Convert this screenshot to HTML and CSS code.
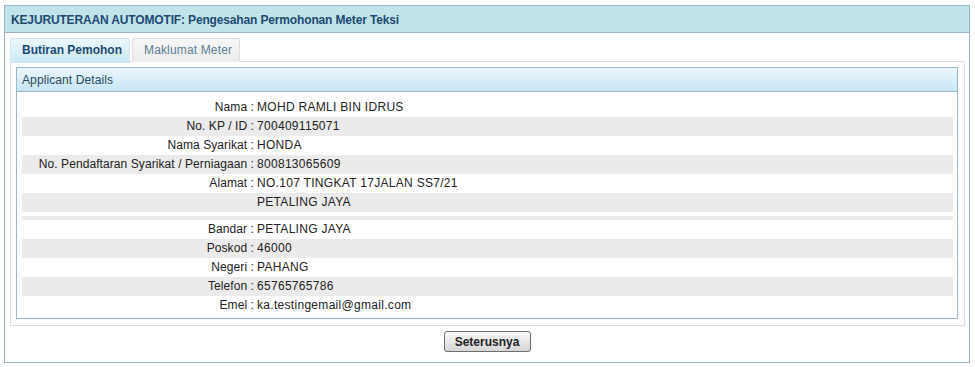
FILE: index.html
```html
<!DOCTYPE html>
<html>
<head>
<meta charset="utf-8">
<link rel="stylesheet" href="styles.css">
</head>
<body>
<div class="page">
  <div class="panel">
    <div class="panel-head">KEJURUTERAAN AUTOMOTIF: Pengesahan Permohonan Meter Teksi</div>
    <div class="tabs">
      <div class="tab active">Butiran Pemohon</div>
      <div class="tab">Maklumat Meter</div>
    </div>
    <div class="tab-panel">
      <div class="box">
        <div class="box-head">Applicant Details</div>
        <table class="details">
          <tr><td class="lbl">Nama :</td><td class="val">MOHD RAMLI BIN IDRUS</td></tr>
          <tr class="alt"><td class="lbl">No. KP / ID :</td><td class="val">700409115071</td></tr>
          <tr><td class="lbl">Nama Syarikat :</td><td class="val">HONDA</td></tr>
          <tr class="alt"><td class="lbl">No. Pendaftaran Syarikat / Perniagaan :</td><td class="val">800813065609</td></tr>
          <tr><td class="lbl">Alamat :</td><td class="val">NO.107 TINGKAT 17JALAN SS7/21</td></tr>
          <tr class="alt"><td class="lbl"></td><td class="val">PETALING JAYA</td></tr>
          <tr class="thin"><td class="lbl"></td><td class="val"></td></tr>
          <tr class="alt thin"><td class="lbl"></td><td class="val"></td></tr>
          <tr><td class="lbl">Bandar :</td><td class="val">PETALING JAYA</td></tr>
          <tr class="alt"><td class="lbl">Poskod :</td><td class="val">46000</td></tr>
          <tr><td class="lbl">Negeri :</td><td class="val">PAHANG</td></tr>
          <tr class="alt"><td class="lbl">Telefon :</td><td class="val">65765765786</td></tr>
          <tr><td class="lbl">Emel :</td><td class="val">ka.testingemail@gmail.com</td></tr>
        </table>
      </div>
    </div>
    <div class="actions">
      <button class="btn" type="button">Seterusnya</button>
    </div>
  </div>
</div>
</body>
</html>
```
FILE: styles.css
```css
html, body {
  margin: 0;
  padding: 0;
  background: #ffffff;
}
body {
  font-family: "Liberation Sans", Arial, sans-serif;
  font-size: 12px;
  color: #222222;
}
.page {
  padding: 5px 0 0 4px;
}
.panel {
  width: 964px;
  height: 356px;
  border: 1px solid #9db6c2;
  display: flex;
  flex-direction: column;
}
.panel-head {
  height: 24px;
  line-height: 24px;
  padding: 2px 0 0 6px;
  background: #c1e4eb;
  border-bottom: 1px solid #9db6c2;
  font-weight: bold;
  color: #1c4a72;
  letter-spacing: -0.15px;
}
.tabs {
  display: flex;
  gap: 2px;
  margin: 5px 0 0 5px;
  height: 24px;
  position: relative;
  z-index: 1;
}
.tab {
  box-sizing: border-box;
  height: 24px;
  line-height: 23px;
  width: 108px;
  padding: 0 0 0 11px;
  white-space: nowrap;
  border: 1px solid #dddddd;
  border-bottom: none;
  border-radius: 3px 3px 0 0;
  background: linear-gradient(#f7f7f7, #ececec);
  color: #5b7e92;
  letter-spacing: 0.15px;
}
.tab.active {
  width: 120px;
  height: 25px;
  background: linear-gradient(#edf7fc, #c9e7f5);
  border-color: #d6e6ee;
  font-weight: bold;
  color: #1c4a72;
  letter-spacing: 0;
}
.tab-panel {
  margin: -1px 0 0 5px;
  width: 955px;
  box-sizing: border-box;
  border: 1px solid #dedede;
  padding: 5px 6px 6px 5px;
}
.box {
  border: 1px solid #9cb9c8;
}
.box-head {
  height: 23px;
  line-height: 24px;
  padding-left: 5px;
  background: linear-gradient(#ecf7fd, #c7e5f5);
  border-bottom: 1px solid #9cb9c8;
  color: #2a4a60;
  letter-spacing: 0.1px;
}
.details {
  border-collapse: collapse;
  margin: 6px 4px 3px 5px;
  width: calc(100% - 9px);
}
.details tr {
  height: 19px;
}
.details tr.alt {
  background: #ebebeb;
}
.details tr.thin {
  height: 4px;
}
.details td {
  padding: 0;
  height: 19px;
  line-height: 19px;
  white-space: nowrap;
}
.details tr.thin td {
  padding: 0;
  line-height: 4px;
  height: 4px;
}
.details td.lbl {
  width: 232px;
  text-align: right;
  letter-spacing: 0.08px;
}
.details td.val {
  padding-left: 3px;
  letter-spacing: 0.3px;
}
.actions {
  display: flex;
  justify-content: center;
  padding-top: 5px;
}
.btn {
  width: 87px;
  height: 21px;
  border: 1px solid #6f6f6f;
  border-radius: 3px;
  background: linear-gradient(#f8f8f8, #d6d6d6);
  font-family: "Liberation Sans", Arial, sans-serif;
  font-size: 12px;
  font-weight: bold;
  color: #222222;
  padding: 0;
}
```
